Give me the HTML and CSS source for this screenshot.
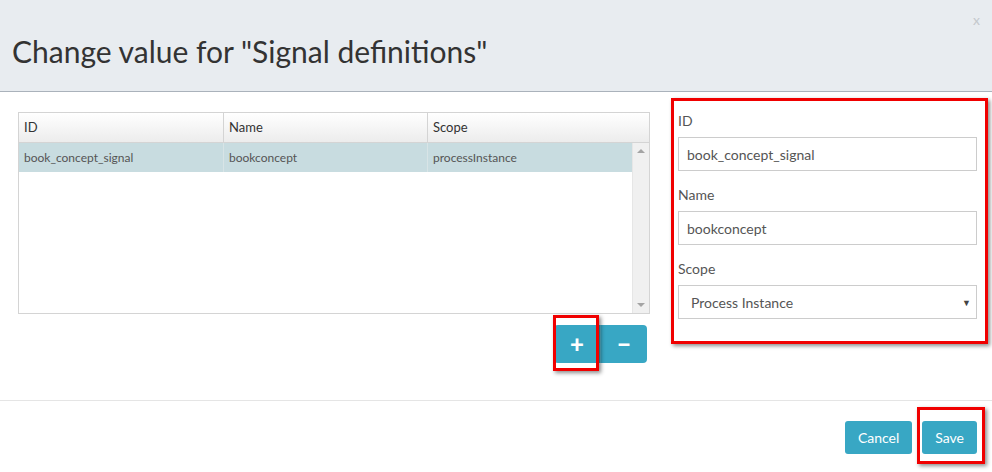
FILE: index.html
```html
<!DOCTYPE html>
<html>
<head>
<meta charset="utf-8">
<link rel="stylesheet" href="styles.css">
</head>
<body>
<div class="modal">
  <div class="modal-header">
    <h1 class="title">Change value for "Signal definitions"</h1>
    <span class="close">x</span>
  </div>
  <div class="modal-body">
    <div class="left-col">
      <div class="grid">
        <div class="grid-head">
          <div class="hcell c1">ID</div>
          <div class="hcell c2">Name</div>
          <div class="hcell c3">Scope</div>
          <div class="hfill"></div>
        </div>
        <div class="grid-body">
          <div class="rows">
            <div class="row selected">
              <div class="cell c1">book_concept_signal</div>
              <div class="cell c2">bookconcept</div>
              <div class="cell c3">processInstance</div>
            </div>
          </div>
          <div class="scrollbar">
            <span class="arrow up"></span>
            <span class="arrow down"></span>
          </div>
        </div>
      </div>
      <div class="grid-actions">
        <div class="btn-group">
          <span class="annot-wrap">
            <button class="btn btn-icon">+</button>
            <span class="annot annot-plus"></span>
          </span>
          <button class="btn btn-icon minus">−</button>
        </div>
      </div>
    </div>
    <div class="detail">
      <label class="lbl">ID</label>
      <input class="field" type="text" value="book_concept_signal">
      <label class="lbl">Name</label>
      <input class="field" type="text" value="bookconcept">
      <label class="lbl">Scope</label>
      <div class="select">
        <span>Process Instance</span>
        <span class="caret">▼</span>
      </div>
    </div>
  </div>
  <div class="modal-footer">
    <button class="btn btn-text">Cancel</button>
    <span class="annot-wrap">
      <button class="btn btn-text">Save</button>
      <span class="annot annot-save"></span>
    </span>
  </div>
</div>
</body>
</html>
```
FILE: styles.css
```css
* { box-sizing: border-box; }
html, body { margin: 0; padding: 0; background: #fff; }
body { font-family: Lato, "Open Sans", sans-serif; color: #333; }

.modal { width: 992px; height: 472px; display: flex; flex-direction: column; }

.modal-header {
  height: 92px;
  background: #e8ecf0;
  border-bottom: 1px solid #aab2bb;
  position: relative;
  padding: 31px 12px 0 12px;
}
.title {
  margin: 0;
  font-weight: 400;
  font-size: 30px;
  line-height: 40px;
  color: #333;
}
.close {
  position: absolute;
  right: 12px;
  top: 11px;
  font-size: 14px;
  color: #c4c8cc;
}

.modal-body {
  height: 308px;
  display: flex;
  padding: 6px 4px 0 18px;
  gap: 21px;
}
.left-col { width: 632px; margin-top: 14px; display: flex; flex-direction: column; }

.grid { border: 1px solid #d4d4d4; height: 202px; display: flex; flex-direction: column; }
.grid-head {
  display: flex;
  height: 30px;
  background: linear-gradient(#ffffff, #ececec);
  border-bottom: 1px solid #d4d4d4;
}
.hcell {
  font-size: 13px;
  color: #333;
  padding: 6px 5px;
  border-right: 1px solid #d4d4d4;
}
.hfill { flex: 1; }
.c1 { width: 205px; }
.c2 { width: 204px; }
.c3 { width: 204px; }
.hcell.c3 { border-right: none; }
.grid-body { flex: 1; display: flex; }
.rows { flex: 1; }
.row { display: flex; height: 29px; }
.row.selected { background: #c8dce0; }
.cell {
  font-size: 12px;
  color: #555;
  padding: 7px 5px;
  border-right: 1px solid #d8e4e6;
}
.cell.c3 { border-right: none; }
.scrollbar {
  width: 17px;
  background: #f0f0f0;
  border-left: 1px solid #e6e6e6;
  position: relative;
}
.arrow {
  position: absolute;
  left: 4px;
  width: 0; height: 0;
  border-left: 4px solid transparent;
  border-right: 4px solid transparent;
}
.arrow.up { top: 6px; border-bottom: 4px solid #a4a4a4; }
.arrow.down { bottom: 6px; border-top: 4px solid #a4a4a4; }

.grid-actions { display: flex; justify-content: flex-end; padding: 11px 3px 0 0; }
.btn-group { display: flex; }
.btn {
  font-family: Lato, "Open Sans", sans-serif;
  border: none;
  background: #38a7c4;
  color: #fff;
  cursor: pointer;
}
.btn-icon {
  width: 46px;
  height: 38px;
  font-size: 24px;
  font-weight: 900;
  line-height: 38px;
  padding: 0;
  border-radius: 4px 0 0 4px;
}
.btn-icon.minus { width: 47px; border-radius: 0 4px 4px 0; border-left: 1px solid #5bbad3; }

.annot-wrap { position: relative; display: inline-flex; }
.annot {
  position: absolute;
  border: 3px solid #f00000;
  box-shadow: 2px 2px 4px rgba(0,0,0,0.45);
  pointer-events: none;
}
.annot-plus { left: -1px; right: 1px; top: -10px; bottom: -8px; }
.annot-save { left: -5px; right: -8px; top: -14px; bottom: -10px; }

.detail {
  width: 317px;
  height: 246px;
  border: 3px solid #f00000;
  box-shadow: 2px 2px 4px rgba(0,0,0,0.45);
  padding: 11px 8px 0 4px;
  display: flex;
  flex-direction: column;
}
.lbl { font-size: 14px; color: #555; height: 25px; line-height: 18px; }
.field {
  height: 34px;
  border: 1px solid #cccccc;
  padding: 0 8px;
  font-family: Lato, "Open Sans", sans-serif;
  font-size: 14px;
  color: #555;
  margin-bottom: 15px;
  width: 100%;
}
.select {
  height: 34px;
  border: 1px solid #cccccc;
  display: flex;
  align-items: center;
  justify-content: space-between;
  padding: 0 5px 0 12px;
  font-size: 14px;
  color: #555;
}
.caret { font-size: 9px; color: #444; }

.modal-footer {
  flex: 1;
  border-top: 1px solid #e5e5e5;
  display: flex;
  justify-content: flex-end;
  align-items: flex-start;
  padding: 20px 15px 0 0;
  gap: 10px;
}
.btn-text {
  height: 33px;
  font-size: 14px;
  padding: 0 13px;
  border-radius: 3px;
}
```
